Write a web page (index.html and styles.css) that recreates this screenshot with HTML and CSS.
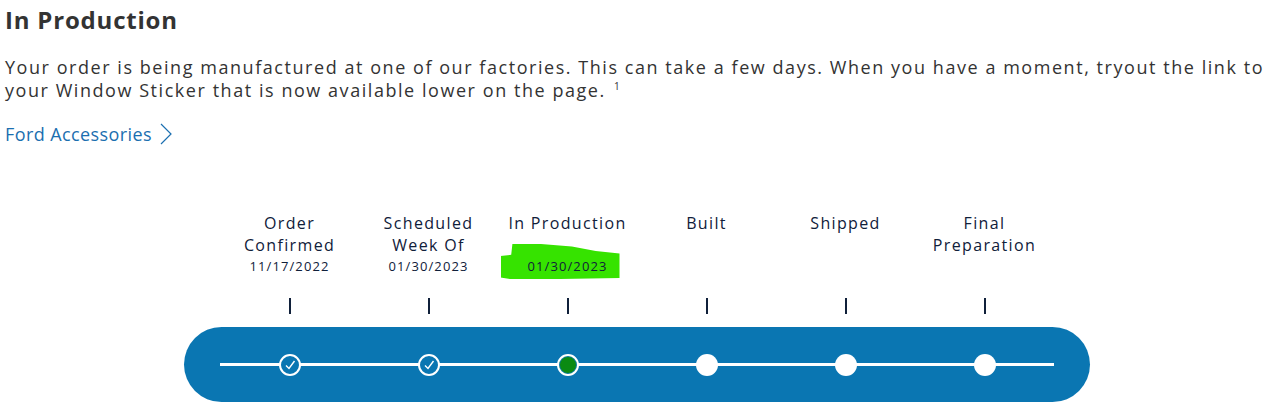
FILE: index.html
```html
<!DOCTYPE html>
<html lang="en">
<head>
  <meta charset="UTF-8">
  <title>Order Status</title>
  <link rel="stylesheet" href="styles.css">
</head>
<body>
  <div class="status">
    <h1>In Production</h1>
    <p class="status-text">Your order is being manufactured at one of our factories. This can take a few days. When you have a moment, tryout the link to your Window Sticker that is now available lower on the page. <sup>1</sup></p>
    <a class="more-link" href="#">Ford Accessories
      <svg width="12" height="22" viewBox="0 0 12 22"><path d="M1 1 L11 11 L1 21" fill="none" stroke="#1b6fb0" stroke-width="1.2"/></svg>
    </a>
  </div>

  <div class="tracker">
    <div class="steps">
      <div class="step">
        <div class="step-label">Order<br>Confirmed</div>
        <div class="step-date">11/17/2022</div>
        <div class="tick"></div>
      </div>
      <div class="step">
        <div class="step-label">Scheduled<br>Week Of</div>
        <div class="step-date">01/30/2023</div>
        <div class="tick"></div>
      </div>
      <div class="step">
        <div class="step-label">In Production</div>
        <div class="step-date"><span class="marker">01/30/2023</span></div>
        <div class="tick"></div>
      </div>
      <div class="step">
        <div class="step-label">Built</div>
        <div class="step-date"></div>
        <div class="tick"></div>
      </div>
      <div class="step">
        <div class="step-label">Shipped</div>
        <div class="step-date"></div>
        <div class="tick"></div>
      </div>
      <div class="step">
        <div class="step-label">Final<br>Preparation</div>
        <div class="step-date"></div>
        <div class="tick"></div>
      </div>
    </div>

    <div class="track">
      <div class="rail">
        <div class="dot-cell"><span class="dot done">
          <svg width="12" height="12" viewBox="0 0 12 12"><path d="M2 6.5 L5 9.5 L10.5 2" fill="none" stroke="#fff" stroke-width="1.4"/></svg>
        </span></div>
        <div class="dot-cell"><span class="dot done">
          <svg width="12" height="12" viewBox="0 0 12 12"><path d="M2 6.5 L5 9.5 L10.5 2" fill="none" stroke="#fff" stroke-width="1.4"/></svg>
        </span></div>
        <div class="dot-cell"><span class="dot current"></span></div>
        <div class="dot-cell"><span class="dot"></span></div>
        <div class="dot-cell"><span class="dot"></span></div>
        <div class="dot-cell"><span class="dot"></span></div>
      </div>
    </div>
  </div>
</body>
</html>
```

FILE: styles.css
```css
body {
  margin: 0;
  padding: 0 5px;
  font-family: 'Open Sans', Arial, sans-serif;
  color: #333;
  background-color: white;
}

.status h1 {
  margin: 4px 0 0;
  font-size: 24px;
  line-height: 32px;
  font-weight: 700;
  letter-spacing: 0.8px;
}

.status-text {
  margin: 20px 0 0;
  font-size: 18px;
  line-height: 23px;
  letter-spacing: 1.55px;
}

.status-text sup {
  font-size: 10px;
  line-height: 10px;
  vertical-align: 7px;
  margin-left: 2px;
}

.more-link {
  display: inline-flex;
  align-items: center;
  gap: 8px;
  margin-top: 20px;
  font-size: 18px;
  line-height: 24px;
  letter-spacing: 0.4px;
  color: #1b6fb0;
  text-decoration: none;
}

.tracker {
  width: 906px;
  margin: 66px 0 0 179px;
}

.steps {
  display: grid;
  grid-template-columns: repeat(6, 139px);
  padding: 0 36px;
}

.step {
  display: flex;
  flex-direction: column;
  align-items: center;
  color: #10203a;
  text-align: center;
}

.step-label {
  font-size: 16px;
  line-height: 22px;
  letter-spacing: 1.35px;
  min-height: 44px;
}

.step-date {
  position: relative;
  height: 20px;
  font-size: 13px;
  line-height: 20px;
  letter-spacing: 1.1px;
  margin-bottom: 22px;
}

.marker {
  position: relative;
  display: inline-block;
  z-index: 0;
}

.marker::before {
  content: "";
  position: absolute;
  left: -27px;
  right: -12px;
  top: -12px;
  bottom: -3px;
  z-index: -1;
  background-color: #36e300;
  clip-path: polygon(0 34%, 9% 31%, 10% 0, 34% 0, 60% 7%, 80% 20%, 100% 27%, 100% 97%, 50% 100%, 8% 100%, 0 96%);
}

.tick {
  width: 2px;
  height: 16px;
  background-color: #10203a;
  margin-bottom: 13px;
}

.track {
  height: 75px;
  border-radius: 38px;
  background-color: #0a76b2;
  padding: 0 36px;
  display: flex;
  align-items: center;
}

.rail {
  flex: 1;
  display: grid;
  grid-template-columns: repeat(6, 1fr);
  height: 22px;
  background: linear-gradient(white, white) center / 100% 3px no-repeat;
}

.dot-cell {
  display: flex;
  justify-content: center;
  align-items: center;
}

.dot {
  width: 22px;
  height: 22px;
  box-sizing: border-box;
  border-radius: 50%;
  background-color: white;
  display: flex;
  align-items: center;
  justify-content: center;
}

.dot.done {
  background-color: #0a76b2;
  border: 2px solid white;
}

.dot.current {
  background-color: #0b8a12;
  border: 2px solid white;
  box-shadow: inset 0 0 0 1px #0a76b2;
}
```
